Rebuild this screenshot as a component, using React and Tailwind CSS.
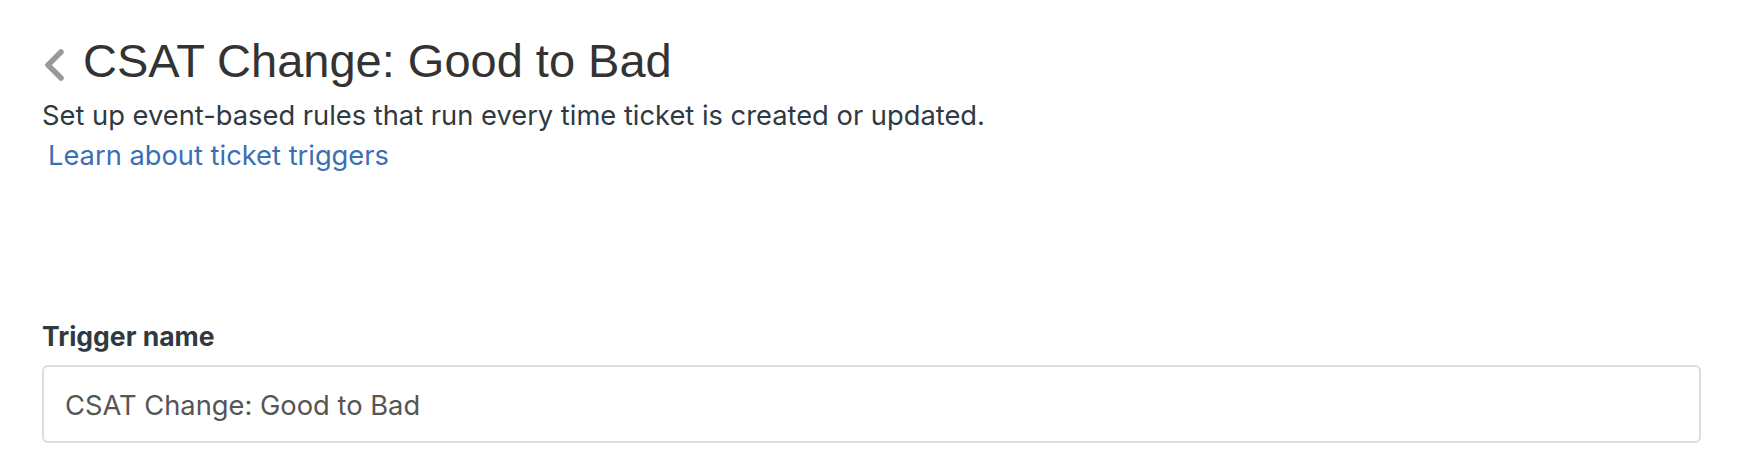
export default function App() {
  return (
    <div className="min-h-screen bg-white pl-[42px] pr-[42px]" style={{ fontFamily: 'Inter, "Liberation Sans", Arial, sans-serif' }}>
      <div className="flex items-center pt-[33px] h-[89px]">
        <svg width="24" height="40" viewBox="0 0 24 40" className="shrink-0">
          <path d="M19 11 L6 24 L19 37" fill="none" stroke="#999999" strokeWidth="5.5" strokeLinecap="round" strokeLinejoin="round" />
        </svg>
        <h1 className="ml-[17px] text-[47px] leading-[56px] text-[#333333] font-normal" style={{ fontFamily: '"Liberation Sans", Arial, sans-serif' }}>
          CSAT Change: Good to Bad
        </h1>
      </div>
      <p className="mt-[11px] text-[27.3px] leading-[32px] text-[#2f3941]">
        Set up event-based rules that run every time ticket is created or updated.
      </p>
      <a href="#" className="block mt-2 ml-[6px] text-[27.3px] leading-[32px] text-[#3a6fb6]">
        Learn about ticket triggers
      </a>
      <label className="block mt-[148px] text-[26.5px] leading-[32px] font-bold text-[#2f3941]">
        Trigger name
      </label>
      <div className="mt-[13px] w-[1659px] h-[78px] border-2 border-[#dddddd] rounded-[6px] flex items-center px-[21px] pt-[3px]">
        <span className="text-[27.3px] leading-[32px] text-[#555555]">CSAT Change: Good to Bad</span>
      </div>
    </div>
  );
}
